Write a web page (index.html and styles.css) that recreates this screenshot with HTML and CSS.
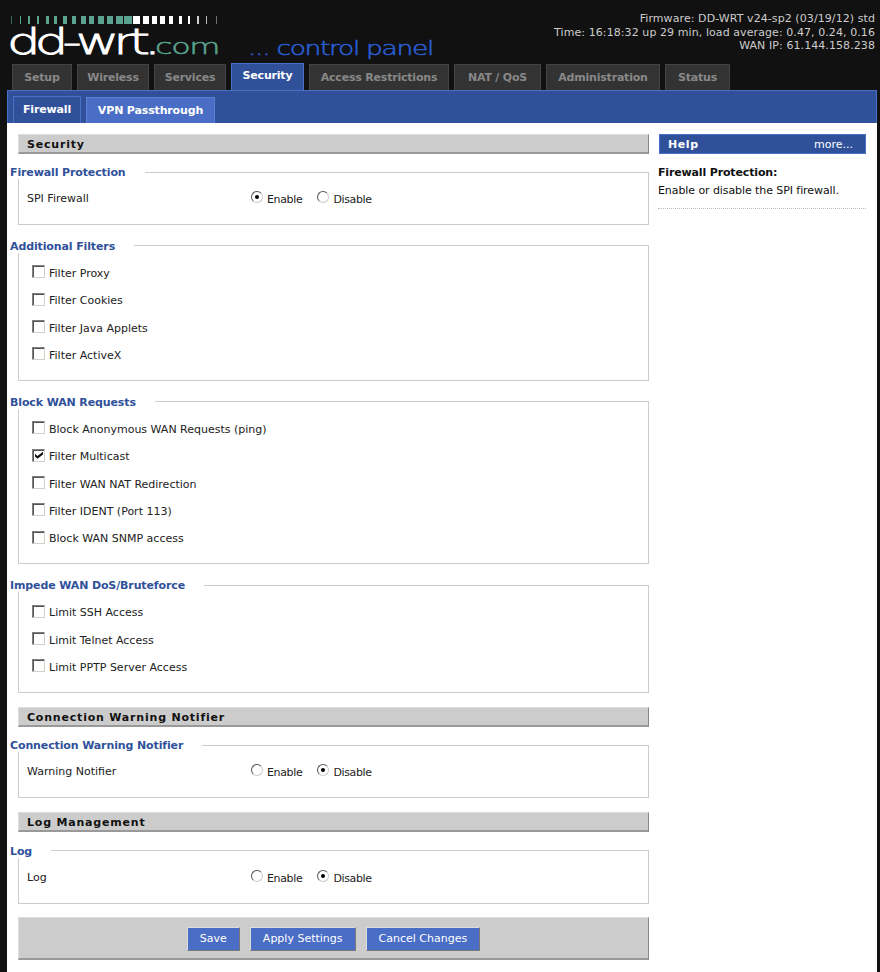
FILE: index.html
```html
<!DOCTYPE html>
<html lang="en">
<head>
<meta charset="utf-8">
<title>DD-WRT Security</title>
<link rel="stylesheet" href="styles.css">
</head>
<body>
<header class="header">
  <svg class="logo" width="440" height="63" viewBox="0 0 440 63" role="img" aria-label="dd-wrt.com control panel">
    <g fill="#5aa38e">
      <rect x="11" y="16" width="1" height="8" opacity=".6"/><rect x="20" y="16" width="1" height="8"/><rect x="28" y="16" width="2" height="8"/><rect x="37" y="16" width="2" height="8"/><rect x="46" y="16" width="3" height="8"/><rect x="54" y="16" width="3" height="8"/><rect x="63" y="16" width="4" height="8"/><rect x="72" y="16" width="4" height="8"/><rect x="81" y="16" width="5" height="8"/><rect x="89" y="16" width="5" height="8"/><rect x="98" y="16" width="6" height="8"/><rect x="107" y="16" width="6" height="8"/><rect x="116" y="16" width="7" height="8"/><rect x="124" y="16" width="8" height="8"/>
    </g>
    <g fill="#fff">
      <rect x="133" y="16" width="7" height="8"/><rect x="143" y="16" width="6" height="8"/><rect x="152" y="16" width="5" height="8"/><rect x="160" y="16" width="5" height="8"/><rect x="169" y="16" width="4" height="8"/><rect x="179" y="16" width="3" height="8"/><rect x="188" y="16" width="2" height="8"/><rect x="197" y="16" width="2" height="8" opacity=".8"/><rect x="206" y="16" width="1" height="8" opacity=".7"/><rect x="216" y="16" width="1" height="8" opacity=".4"/>
    </g>
    <text class="logo-main" x="7" y="54" textLength="148" lengthAdjust="spacingAndGlyphs">dd-wrt.</text>
    <text class="logo-com" x="155" y="54" textLength="64" lengthAdjust="spacingAndGlyphs">com</text>
    <text class="logo-panel" x="248" y="55" textLength="185" lengthAdjust="spacingAndGlyphs">... control panel</text>
  </svg>
  <div class="status">
    <div>Firmware: DD-WRT v24-sp2 (03/19/12) std</div>
    <div>Time: 16:18:32 up 29 min, load average: 0.47, 0.24, 0.16</div>
    <div>WAN IP: 61.144.158.238</div>
  </div>
</header>
<nav class="tabs">
  <a class="tab">Setup</a>
  <a class="tab">Wireless</a>
  <a class="tab">Services</a>
  <a class="tab tab-active">Security</a>
  <a class="tab">Access Restrictions</a>
  <a class="tab">NAT / QoS</a>
  <a class="tab">Administration</a>
  <a class="tab">Status</a>
</nav>
<div class="panel">
  <nav class="subtabs">
    <a class="subtab subtab-active">Firewall</a>
    <a class="subtab">VPN Passthrough</a>
  </nav>
  <div class="content">
    <main class="form">
      <h2 class="bar">Security</h2>
      <fieldset class="group">
        <legend>Firewall Protection</legend>
        <div class="row">
          <span class="row-label">SPI Firewall</span>
          <label class="choice"><input type="radio" name="spi" checked>Enable</label>
          <label class="choice"><input type="radio" name="spi">Disable</label>
        </div>
      </fieldset>
      <fieldset class="group group-list">
        <legend>Additional Filters</legend>
        <label class="row check"><input type="checkbox">Filter Proxy</label>
        <label class="row check"><input type="checkbox">Filter Cookies</label>
        <label class="row check"><input type="checkbox">Filter Java Applets</label>
        <label class="row check"><input type="checkbox">Filter ActiveX</label>
      </fieldset>
      <fieldset class="group group-list">
        <legend>Block WAN Requests</legend>
        <label class="row check"><input type="checkbox">Block Anonymous WAN Requests (ping)</label>
        <label class="row check"><input type="checkbox" checked>Filter Multicast</label>
        <label class="row check"><input type="checkbox">Filter WAN NAT Redirection</label>
        <label class="row check"><input type="checkbox">Filter IDENT (Port 113)</label>
        <label class="row check"><input type="checkbox">Block WAN SNMP access</label>
      </fieldset>
      <fieldset class="group group-list">
        <legend>Impede WAN DoS/Bruteforce</legend>
        <label class="row check"><input type="checkbox">Limit SSH Access</label>
        <label class="row check"><input type="checkbox">Limit Telnet Access</label>
        <label class="row check"><input type="checkbox">Limit PPTP Server Access</label>
      </fieldset>
      <h2 class="bar bar-next">Connection Warning Notifier</h2>
      <fieldset class="group">
        <legend>Connection Warning Notifier</legend>
        <div class="row">
          <span class="row-label">Warning Notifier</span>
          <label class="choice"><input type="radio" name="warn">Enable</label>
          <label class="choice"><input type="radio" name="warn" checked>Disable</label>
        </div>
      </fieldset>
      <h2 class="bar bar-next">Log Management</h2>
      <fieldset class="group">
        <legend>Log</legend>
        <div class="row">
          <span class="row-label">Log</span>
          <label class="choice"><input type="radio" name="log">Enable</label>
          <label class="choice"><input type="radio" name="log" checked>Disable</label>
        </div>
      </fieldset>
      <div class="actions">
        <button class="btn" type="button">Save</button>
        <button class="btn" type="button">Apply Settings</button>
        <button class="btn" type="button">Cancel Changes</button>
      </div>
    </main>
    <aside class="help">
      <div class="help-head"><span class="help-title">Help</span><span class="help-more">more...</span></div>
      <div class="help-body">
        <div class="help-term">Firewall Protection:</div>
        <div class="help-def">Enable or disable the SPI firewall.</div>
      </div>
    </aside>
  </div>
</div>
</body>
</html>
```
FILE: styles.css
```css
* { box-sizing: border-box; }
html, body { margin: 0; padding: 0; }
body {
  background: #111;
  font-family: "DejaVu Sans", Verdana, sans-serif;
  font-size: 11px;
  color: #222;
}
.header {
  display: flex;
  justify-content: space-between;
  height: 63px;
}
.logo { display: block; flex: none; }
.logo text { font-family: "DejaVu Sans", sans-serif; font-weight: 200; }
.logo-main { font-size: 36px; fill: #fff; stroke: #fff; stroke-width: .9px; letter-spacing: -4px; }
.logo-com { font-size: 22px; fill: #5aa38e; stroke: #5aa38e; stroke-width: .5px; letter-spacing: -1px; }
.logo-panel { font-size: 20px; fill: #2a5ed2; stroke: #2a5ed2; stroke-width: .5px; letter-spacing: -1px; }
.status {
  padding: 12px 5px 0 0;
  color: #ccc;
  line-height: 13.6px;
  text-align: right;
  font-size: 11px;
  letter-spacing: .08px;
  white-space: nowrap;
}
.tabs {
  display: grid;
  grid-template-columns: 60px 72px 72px 73px 140px 87px 114px 65px;
  align-items: end;
  gap: 5px;
  padding-left: 12px;
  height: 27px;
}
.tab {
  display: block;
  height: 26px;
  line-height: 25px;
  text-align: center;
  background: #333;
  border: 1px solid #444;
  border-bottom: 0;
  color: #888;
  font-size: 11px;
  font-weight: bold;
  letter-spacing: -.2px;
}
.tab-active {
  height: 27px;
  line-height: 24px;
  background: #30519a;
  border-color: #4a70c8;
  color: #fff;
}
.panel {
  margin: 0 3px 0 7px;
  background: #fff;
}
.subtabs {
  display: grid;
  grid-template-columns: 68px 129px;
  align-items: end;
  gap: 5px;
  height: 33px;
  padding-left: 5px;
  background: #30519a;
  border: 1px solid #4a70c8;
  border-bottom: 0;
}
.subtab {
  display: block;
  height: 26px;
  line-height: 25px;
  text-align: center;
  background: #4a6ec5;
  border: 1px solid #5c80d6;
  border-bottom: 0;
  color: #fff;
  font-size: 11px;
  font-weight: bold;
  letter-spacing: -.15px;
}
.subtab-active {
  height: 27px;
  background: #30519a;
  border-color: #4a70c8;
}
.content {
  display: flex;
  padding: 11px 11px 11.7px 11px;
  gap: 10px;
}
.form { width: 631px; flex: none; }
.bar {
  margin: 0;
  height: 20px;
  padding-left: 8px;
  background: #ccc;
  border: 1px solid #ddd;
  border-right-color: #888;
  border-bottom: 2px solid #999;
  color: #111;
  font-size: 11px;
  font-weight: bold;
  line-height: 19px;
  letter-spacing: .8px;
}
.bar-next { margin-top: 13.8px; }
.group {
  margin: 13.7px 0 0;
  padding: 6px 0 11.7px;
  border: 1px solid #ccc;
  min-width: 0;
}
.group-list { padding: 7px 0 11px; }
.bar + .group { margin-top: 11.5px; }
.bar:first-child + .group { margin-top: 11px; }
.group legend {
  margin-left: -9px;
  padding: 0 19px 0 0;
  height: 14px;
  line-height: 16px;
  background: #fff;
  color: #30519a;
  font-size: 11px;
  font-weight: bold;
  letter-spacing: -.12px;
}
.row {
  display: flex;
  align-items: center;
  height: 27.33px;
  padding-left: 8px;
}
.row-label { width: 224px; flex: none; }
.choice {
  display: flex;
  align-items: center;
  margin-right: 15px;
  padding-top: 2px;
  letter-spacing: -.35px;
}
.choice input {
  appearance: none;
  position: relative;
  width: 12px;
  height: 12px;
  margin: -5px 4px 0 0;
  border-radius: 50%;
  border: 1px solid;
  border-color: #555 #ccc #ccc #555;
  background: #fff;
}
.choice input:checked::after {
  content: "";
  position: absolute;
  left: 3px;
  top: 3px;
  width: 4px;
  height: 4px;
  border-radius: 50%;
  background: #000;
}
.check input {
  appearance: none;
  position: relative;
  width: 13px;
  height: 13px;
  margin: -3px 4px 0 5px;
  border: 1px solid;
  border-color: #808080 #d4d0c8 #d4d0c8 #808080;
  box-shadow: inset 1px 1px 0 #555;
  background: #fff;
}
.check input:checked::after {
  content: "";
  position: absolute;
  left: 2px;
  top: 2px;
  width: 8px;
  height: 7px;
  background: #111;
  clip-path: polygon(0 30%, 30% 60%, 100% 0, 100% 40%, 30% 100%, 0 70%);
}
.actions {
  display: flex;
  justify-content: center;
  align-items: center;
  gap: 10px;
  height: 43px;
  margin-top: 13.5px;
  padding-top: 1px;
  background: #ccc;
  border: 1px solid #ddd;
  border-right-color: #888;
  border-bottom: 2px solid #999;
}
.btn {
  height: 24px;
  padding: 0 12px;
  background: #4a6ec5;
  border: 1px solid;
  border-color: #ddd #777 #777 #ddd;
  color: #fff;
  font-family: inherit;
  font-size: 11px;
}
.help { width: 207px; flex: none; }
.help-head {
  display: flex;
  justify-content: space-between;
  align-items: center;
  height: 20px;
  padding: 0 12px 0 8px;
  background: #30519a;
  border: 1px solid #4a70c8;
  color: #fff;
}
.help-title { font-weight: bold; font-size: 11px; letter-spacing: .6px; }
.help-more { font-size: 11px; }
.help-body {
  padding: 10px 0 8px;
  margin-left: -1px;
  border-bottom: 1px dotted #bbb;
  color: #111;
  font-size: 11px;
  line-height: 18px;
}
.help-term { font-weight: bold; letter-spacing: -.15px; }
.help-def { letter-spacing: -.08px; }
```
